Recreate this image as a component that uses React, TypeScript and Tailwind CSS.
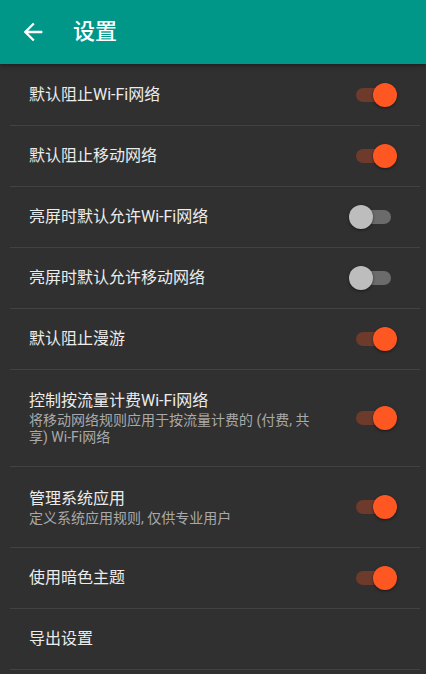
const font = { fontFamily: "Roboto, 'Noto Sans CJK SC', 'Noto Sans', sans-serif" };

interface Item {
  title: string;
  sub?: string;
  on?: boolean;
}

const items: Item[] = [
  { title: "默认阻止Wi-Fi网络", on: true },
  { title: "默认阻止移动网络", on: true },
  { title: "亮屏时默认允许Wi-Fi网络", on: false },
  { title: "亮屏时默认允许移动网络", on: false },
  { title: "默认阻止漫游", on: true },
  { title: "控制按流量计费Wi-Fi网络", sub: "将移动网络规则应用于按流量计费的 (付费, 共享) Wi-Fi网络", on: true },
  { title: "管理系统应用", sub: "定义系统应用规则, 仅供专业用户", on: true },
  { title: "使用暗色主题", on: true },
  { title: "导出设置" },
];

function Toggle({ on }: { on: boolean }) {
  return (
    <div className="relative w-[48px] h-[24px] shrink-0">
      <div
        className={`absolute left-[7px] top-[5px] w-[35px] h-[14px] rounded-full ${
          on ? "bg-[#6e3a2b]" : "bg-[#6b6b6b]"
        }`}
      />
      <div
        className={`absolute top-0 w-[24px] h-[24px] rounded-full shadow-[0_1px_3px_rgba(0,0,0,0.5)] ${
          on ? "left-[24px] bg-[#ff5722]" : "left-0 bg-[#bdbdbd]"
        }`}
      />
    </div>
  );
}

export default function App() {
  return (
    <div className="w-[426px] h-[674px] overflow-hidden bg-[#303030]" style={font}>
      <header className="relative z-10 h-[64px] bg-[#009688] flex items-center shadow-[0_2px_4px_rgba(0,0,0,0.35)]">
        <svg width="28" height="28" viewBox="0 0 24 24" className="ml-[19px] fill-white">
          <path d="M20 11H7.83l5.59-5.59L12 4l-8 8 8 8 1.41-1.41L7.83 13H20v-2z" />
        </svg>
        <h1 className="ml-[26px] text-[22px] font-medium text-white leading-none">设置</h1>
      </header>
      <div className="pt-px">
        {items.map((it) => (
          <div key={it.title}>
            <div
              className={`flex items-center pl-[29px] pr-[29px] ${
                it.sub ? "py-[20px] min-h-[80px]" : "h-[60px]"
              }`}
            >
              <div className="flex-1 pr-[20px]">
                <div className="text-[16px] leading-[22px] text-[#ececec]">{it.title}</div>
                {it.sub && (
                  <div className="text-[14px] leading-[17px] text-[#a9a9a9] max-w-[296px]">{it.sub}</div>
                )}
              </div>
              {it.on !== undefined && <Toggle on={it.on} />}
            </div>
            <div className="ml-[10px] mr-[6px] h-px bg-[#424242]" />
          </div>
        ))}
      </div>
    </div>
  );
}
